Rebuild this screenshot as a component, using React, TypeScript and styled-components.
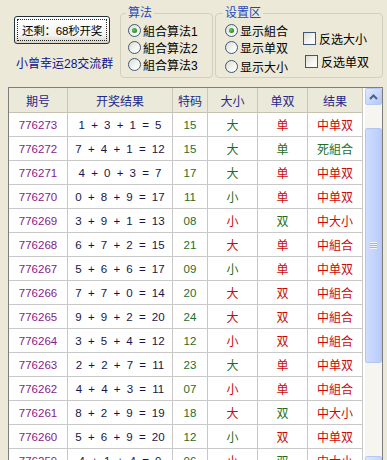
import React from 'react';
import styled, { createGlobalStyle } from 'styled-components';

const GlobalStyle = createGlobalStyle`
  html, body { margin: 0; padding: 0; background: #ECE9D8; }
  body {
    font-family: "Liberation Sans", "Noto Sans CJK SC", sans-serif;
    font-size: 12px;
  }
`;

const Page = styled.div`
  width: 387px;
  height: 460px;
  overflow: hidden;
  background: #ECE9D8;
  display: flex;
  flex-direction: column;
`;

const TopBar = styled.div`
  display: flex;
  align-items: flex-start;
  height: 87px;
  flex: none;
`;

const LeftCol = styled.div`
  display: flex;
  flex-direction: column;
  padding: 16px 0 0 14px;
  width: 96px;
  margin-right: 10px;
`;

const ActionButton = styled.button`
  box-sizing: border-box;
  width: 96px;
  height: 28px;
  padding: 0;
  border: 1px solid #24303c;
  border-radius: 3px;
  background: linear-gradient(#ffffff 0%, #f4f3ee 70%, #d9d4c8 100%);
  outline: 1px dotted #222;
  outline-offset: -4px;
  color: #000;
  font-family: "Liberation Sans", "Noto Sans CJK SC", sans-serif;
  font-size: 11.5px;
  letter-spacing: -0.2px;
  white-space: nowrap;
`;

const GroupLink = styled.div`
  margin: 13px 0 0 2px;
  color: #10108c;
  font-size: 12px;
  line-height: 14px;
  white-space: nowrap;
`;

const Group = styled.fieldset<{ $w: number; $pl: number; $ml: number }>`
  box-sizing: border-box;
  width: ${(p) => p.$w}px;
  height: 72px;
  margin: 6px 0 0 ${(p) => p.$ml}px;
  padding: 0 0 0 ${(p) => p.$pl}px;
  border: 1px solid #d0d0bf;
  border-radius: 4px;
  min-width: 0;
  display: flex;
`;

const Legend = styled.legend`
  padding: 0 2px;
  margin-left: -2px;
  color: #1f48b8;
  font-size: 12px;
  line-height: 14px;
`;

const OptionCol = styled.div<{ $pt: number; $gap: number; $ml?: number }>`
  display: flex;
  flex-direction: column;
  padding-top: ${(p) => p.$pt}px;
  gap: ${(p) => p.$gap}px;
  margin-left: ${(p) => p.$ml ?? 0}px;
`;

const OptionRow = styled.label<{ $h?: number; $indent?: number }>`
  display: flex;
  align-items: center;
  gap: 2px;
  height: ${(p) => p.$h ?? 17}px;
  margin-left: ${(p) => p.$indent ?? 0}px;
  color: #000;
  font-size: 12px;
  white-space: nowrap;
`;

const RadioCircle = styled.span<{ $checked?: boolean }>`
  box-sizing: border-box;
  width: 13px;
  height: 13px;
  flex: none;
  border-radius: 50%;
  border: 1px solid #3b5877;
  background: linear-gradient(135deg, #dcdcd4 0%, #f4f4f0 55%, #ffffff 100%);
  display: flex;
  align-items: center;
  justify-content: center;
  &::after {
    content: '';
    width: 5px;
    height: 5px;
    border-radius: 50%;
    background: ${(p) =>
      p.$checked ? 'radial-gradient(circle at 40% 40%, #64c864 0%, #2a962a 60%, #1b6e1b 100%)' : 'transparent'};
  }
`;

const CheckBox = styled.span`
  box-sizing: border-box;
  width: 13px;
  height: 13px;
  flex: none;
  border: 1px solid #3b5877;
  background: linear-gradient(135deg, #dcdcd4 0%, #f4f4f0 55%, #ffffff 100%);
  margin-right: 1px;
`;

const ListView = styled.div`
  box-sizing: border-box;
  margin-left: 8px;
  width: 375px;
  height: 380px;
  flex: none;
  border: 1px solid #7d7d7d;
  background: #fff;
  display: grid;
  grid-template-columns: 354px 2px 17px;
  overflow: hidden;
`;

const Table = styled.div`
  display: flex;
  flex-direction: column;
`;

const cols = '59px 105px 35px 50px 50px 55px';

const HeaderRow = styled.div`
  display: grid;
  grid-template-columns: ${cols};
  height: 25px;
  flex: none;
  background: #ebe9da;
`;

const HeaderCell = styled.div`
  box-sizing: border-box;
  display: flex;
  align-items: center;
  justify-content: center;
  border-right: 1px solid #cbc7b8;
  border-bottom: 1px solid #c5c2b2;
  color: #24288a;
  font-size: 12px;
`;

const DataRow = styled.div`
  display: grid;
  grid-template-columns: ${cols};
  height: 24px;
  flex: none;
`;

const Cell = styled.div<{ $color: string; $num?: boolean; $spaced?: boolean }>`
  box-sizing: border-box;
  display: flex;
  align-items: center;
  justify-content: center;
  border-right: 1px solid #c8c8c8;
  border-bottom: 1px solid #c8c8c8;
  color: ${(p) => p.$color};
  font-size: ${(p) => (p.$num ? '11.5px' : '12px')};
  word-spacing: ${(p) => (p.$spaced ? '3px' : '0')};
  white-space: pre;
`;

const Gap = styled.div`
  background: #fff;
`;

const ScrollBar = styled.div`
  display: flex;
  flex-direction: column;
  background: #f6f5f0;
`;

const ScrollButton = styled.div`
  box-sizing: border-box;
  height: 17px;
  flex: none;
  border: 1px solid #b6c9f3;
  border-radius: 2px;
  background: linear-gradient(135deg, #dfe8fd 0%, #c5d5fb 60%, #b4c8f6 100%);
  display: flex;
  align-items: center;
  justify-content: center;
`;

const Track = styled.div`
  flex: 1;
  display: flex;
  flex-direction: column;
`;

const Thumb = styled.div`
  box-sizing: border-box;
  margin-top: 23px;
  height: 235px;
  border: 1px solid #b2c6f2;
  border-radius: 2px;
  background: linear-gradient(90deg, #cfdcfd 0%, #c4d4fc 50%, #b9cbf8 100%);
  display: flex;
  align-items: center;
  justify-content: center;
`;

const Grip = styled.div`
  width: 7px;
  height: 7px;
  background: repeating-linear-gradient(#f0f4ff 0 1px, #9fb3e0 1px 2px);
`;

const RED = '#c80a0a';
const GREEN = '#1f6e1f';
const ID = '#8a1a8a';
const DRAW = '#15154a';

type Row = [string, string, string, string, 'r' | 'g', string, 'r' | 'g'];

const rows: Row[] = [
  ['776273', '1 + 3 + 1 = 5', '15', '大', 'g', '单', 'r'],
  ['776272', '7 + 4 + 1 = 12', '15', '大', 'g', '单', 'g'],
  ['776271', '4 + 0 + 3 = 7', '17', '大', 'g', '单', 'r'],
  ['776270', '0 + 8 + 9 = 17', '11', '小', 'g', '单', 'r'],
  ['776269', '3 + 9 + 1 = 13', '08', '小', 'r', '双', 'g'],
  ['776268', '6 + 7 + 2 = 15', '21', '大', 'r', '单', 'r'],
  ['776267', '5 + 6 + 6 = 17', '09', '小', 'g', '单', 'r'],
  ['776266', '7 + 7 + 0 = 14', '20', '大', 'r', '双', 'r'],
  ['776265', '9 + 9 + 2 = 20', '24', '大', 'r', '双', 'r'],
  ['776264', '3 + 5 + 4 = 12', '12', '小', 'r', '双', 'r'],
  ['776263', '2 + 2 + 7 = 11', '23', '大', 'g', '单', 'r'],
  ['776262', '4 + 4 + 3 = 11', '07', '小', 'r', '单', 'r'],
  ['776261', '8 + 2 + 9 = 19', '18', '大', 'r', '双', 'g'],
  ['776260', '5 + 6 + 9 = 20', '12', '小', 'g', '双', 'r'],
  ['776259', '4 + 1 + 4 = 9', '06', '小', 'r', '双', 'g'],
];

const resultOf = (a: 'r' | 'g', b: 'r' | 'g') => {
  if (a === 'r' && b === 'r') return '中組合';
  if (a === 'r') return '中大小';
  if (b === 'r') return '中单双';
  return '死組合';
};

const Chevron: React.FC<{ down?: boolean }> = ({ down }) => (
  <svg width="9" height="6" viewBox="0 0 9 6">
    <path
      d={down ? 'M1 1 L4.5 4.5 L8 1' : 'M1 5 L4.5 1.5 L8 5'}
      fill="none"
      stroke="#4d6185"
      strokeWidth="2"
    />
  </svg>
);

export default function App() {
  return (
    <Page>
      <GlobalStyle />
      <TopBar>
        <LeftCol>
          <ActionButton>还剩：68秒开奖</ActionButton>
          <GroupLink>小曾幸运28交流群</GroupLink>
        </LeftCol>
        <Group $w={93} $pl={7} $ml={0}>
          <Legend>算法</Legend>
          <OptionCol $pt={2} $gap={0}>
            <OptionRow>
              <RadioCircle $checked />
              組合算法1
            </OptionRow>
            <OptionRow>
              <RadioCircle />
              組合算法2
            </OptionRow>
            <OptionRow>
              <RadioCircle />
              組合算法3
            </OptionRow>
          </OptionCol>
        </Group>
        <Group $w={168} $pl={9} $ml={2}>
          <Legend>设置区</Legend>
          <OptionCol $pt={2} $gap={0}>
            <OptionRow>
              <RadioCircle $checked />
              显示組合
            </OptionRow>
            <OptionRow>
              <RadioCircle />
              显示单双
            </OptionRow>
            <OptionRow $h={20}>
              <RadioCircle />
              显示大小
            </OptionRow>
          </OptionCol>
          <OptionCol $pt={10} $gap={6} $ml={15}>
            <OptionRow>
              <CheckBox />
              反选大小
            </OptionRow>
            <OptionRow $indent={2}>
              <CheckBox />
              反选单双
            </OptionRow>
          </OptionCol>
        </Group>
      </TopBar>
      <ListView>
        <Table>
          <HeaderRow>
            {['期号', '开奖结果', '特码', '大小', '单双', '结果'].map((h) => (
              <HeaderCell key={h}>{h}</HeaderCell>
            ))}
          </HeaderRow>
          {rows.map(([id, draw, sp, bs, bsc, oe, oec]) => {
            const res = resultOf(bsc, oec);
            return (
              <DataRow key={id}>
                <Cell $color={ID} $num>{id}</Cell>
                <Cell $color={DRAW} $num $spaced>{draw}</Cell>
                <Cell $color={GREEN} $num>{sp}</Cell>
                <Cell $color={bsc === 'r' ? RED : GREEN}>{bs}</Cell>
                <Cell $color={oec === 'r' ? RED : GREEN}>{oe}</Cell>
                <Cell $color={res === '死組合' ? GREEN : RED}>{res}</Cell>
              </DataRow>
            );
          })}
        </Table>
        <Gap />
        <ScrollBar>
          <ScrollButton>
            <Chevron />
          </ScrollButton>
          <Track>
            <Thumb>
              <Grip />
            </Thumb>
          </Track>
          <ScrollButton>
            <Chevron down />
          </ScrollButton>
        </ScrollBar>
      </ListView>
    </Page>
  );
}
